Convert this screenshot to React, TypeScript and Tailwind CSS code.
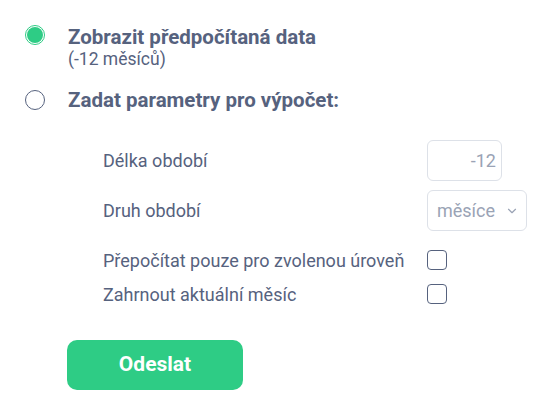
import { ChevronDown } from 'lucide-react';

function Radio({ checked }: { checked?: boolean }) {
  if (checked) {
    return (
      <div className="w-5 h-5 rounded-full border border-[#2ecc85] bg-white flex items-center justify-center shrink-0">
        <div className="w-[16px] h-[16px] rounded-full bg-[#2ecc85]" />
      </div>
    );
  }
  return <div className="w-5 h-5 rounded-full border border-[#56627e] bg-white shrink-0" />;
}

function Checkbox() {
  return <div className="w-5 h-5 rounded-[4px] border-[1.5px] border-[#56627e] bg-white" />;
}

export default function App() {
  return (
    <div className="w-[547px] h-[410px] bg-white pt-[25px] pl-[25px] text-[#56627e]" style={{ fontFamily: 'Roboto, "Noto Sans", sans-serif' }}>
      <div className="flex items-start gap-[23px]">
        <Radio checked />
        <div>
          <div className="text-[20.5px] leading-[24px] font-bold">Zobrazit předpočítaná data</div>
          <div className="text-[17.5px] leading-[20px]">(-12 měsíců)</div>
        </div>
      </div>

      <div className="flex items-center gap-[23px] mt-[19px] h-[24px]">
        <Radio />
        <div className="text-[20.5px] leading-[24px] font-bold">Zadat parametry pro výpočet:</div>
      </div>

      <div className="pl-[78px] mt-[28px] text-[18px]">
        <div className="flex items-center h-[41px]">
          <div className="w-[324px]">Délka období</div>
          <div className="w-[75px] h-[41px] border border-[#dde1e8] rounded-[6px] flex items-center justify-end pr-[5px] text-[#9aa3b5]">
            -12
          </div>
        </div>
        <div className="flex items-center h-[41px] mt-[9px]">
          <div className="w-[324px]">Druh období</div>
          <div className="w-[100px] h-[41px] border border-[#dde1e8] rounded-[6px] flex items-center pl-[9px] pr-[7px] text-[#9aa3b5] justify-between">
            <span>měsíce</span>
            <ChevronDown className="w-[14px] h-[14px]" strokeWidth={2} />
          </div>
        </div>
        <div className="flex items-center h-[20px] mt-[19px]">
          <div className="w-[324px]">Přepočítat pouze pro zvolenou úroveň</div>
          <Checkbox />
        </div>
        <div className="flex items-center h-[20px] mt-[14px]">
          <div className="w-[324px]">Zahrnout aktuální měsíc</div>
          <Checkbox />
        </div>
      </div>

      <button className="ml-[42px] mt-[36px] w-[176px] h-[50px] rounded-[10px] bg-[#2ecc85] text-white text-[21px] font-bold">
        Odeslat
      </button>
    </div>
  );
}
